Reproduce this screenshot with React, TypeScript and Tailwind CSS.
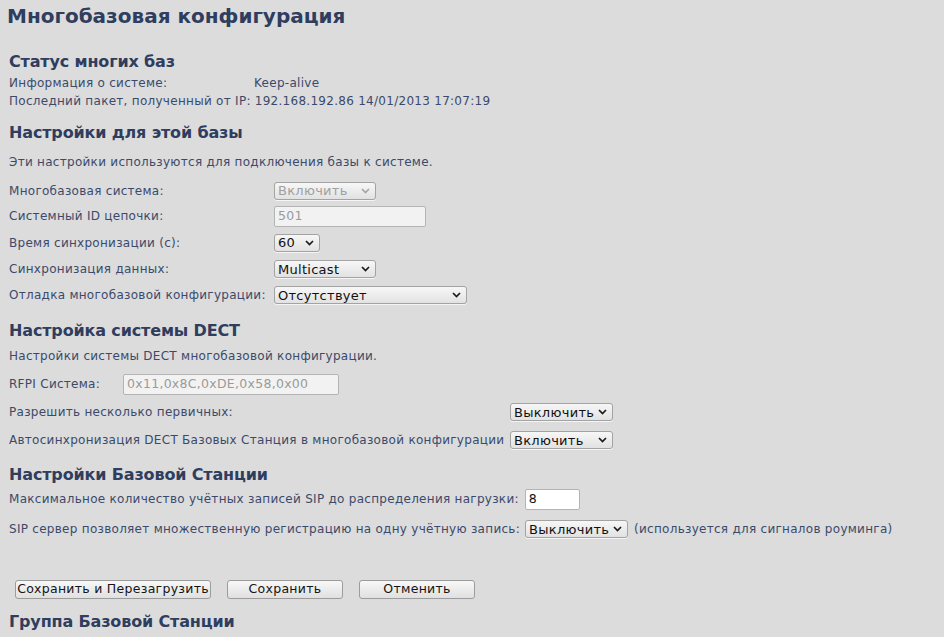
import React from "react";

const Chevron: React.FC<{ muted?: boolean }> = ({ muted }) => (
  <svg width="9" height="6" viewBox="0 0 9 6" className="shrink-0">
    <path
      d="M1 1 L4.5 4.5 L8 1"
      fill="none"
      stroke={muted ? "#a5a5a5" : "#1a1a1a"}
      strokeWidth="1.7"
    />
  </svg>
);

const FakeSelect: React.FC<{ value: string; width: string; disabled?: boolean }> = ({
  value,
  width,
  disabled,
}) => (
  <div
    className={`${width} h-[18px] flex items-center justify-between pl-[3px] pr-[5px] rounded-[3px] border border-[#a3a3a3] bg-gradient-to-b from-[#f7f7f7] to-[#e2e2e2] shadow-[0_1px_0_rgba(255,255,255,0.7)] text-[13px] leading-none ${
      disabled ? "text-[#a0a0a0]" : "text-[#111]"
    }`}
  >
    <span>{value}</span>
    <Chevron muted={disabled} />
  </div>
);

const TextBox: React.FC<{ value: string; width: string; disabled?: boolean }> = ({
  value,
  width,
  disabled,
}) => (
  <div
    className={`${width} h-[21px] flex items-center pl-[3px] rounded-[2px] border border-[#b4b4b4] text-[12.5px] leading-none ${
      disabled ? "bg-[#f2f2f2] text-[#9a9a9a]" : "bg-white text-[#111]"
    }`}
  >
    {value}
  </div>
);

const Heading: React.FC<{ children: React.ReactNode; className?: string }> = ({
  children,
  className,
}) => (
  <h2
    className={`text-[16px] leading-[20px] font-bold tracking-[-0.15px] text-[#2f3d5e] pl-[9px] ${className ?? ""}`}
  >
    {children}
  </h2>
);

const Btn: React.FC<{ label: string; width: string }> = ({ label, width }) => (
  <div
    className={`${width} h-[19px] flex items-center justify-center rounded-[3px] border border-[#9c9c9c] bg-gradient-to-b from-[#f8f8f8] to-[#e0e0e0] text-[12.5px] text-[#141414] leading-none`}
  >
    {label}
  </div>
);

export default function App() {
  return (
    <div
      className="min-h-[637px] w-full bg-[#dcdcdc] text-[12px] tracking-[0.28px] text-[#3b4a6b] overflow-hidden"
      style={{ fontFamily: '"DejaVu Sans", Verdana, sans-serif' }}
    >
      <h1 className="mt-[4px] pl-[7px] text-[20px] leading-[24px] font-bold tracking-normal text-[#2f3d5e]">
        Многобазовая конфигурация
      </h1>

      <Heading className="mt-[24px]">Статус многих баз</Heading>
      <div className="pl-[9px] leading-[18px] mt-[2px]">
        <div className="flex">
          <span className="w-[245px]">Информация о системе:</span>
          <span>Keep-alive</span>
        </div>
        <div className="flex">
          <span>Последний пакет, полученный от IP:</span>
          <span className="ml-[4px]">192.168.192.86 14/01/2013 17:07:19</span>
        </div>
      </div>

      <Heading className="mt-[13px]">Настройки для этой базы</Heading>
      <p className="pl-[9px] leading-[18px] mt-[10px]">
        Эти настройки используются для подключения базы к системе.
      </p>
      <div className="pl-[9px] mt-[7px]">
        <div className="flex items-center h-[25px]">
          <span className="w-[265px]">Многобазовая система:</span>
          <FakeSelect value="Включить" width="w-[102px]" disabled />
        </div>
        <div className="flex items-center h-[26px]">
          <span className="w-[265px]">Системный ID цепочки:</span>
          <TextBox value="501" width="w-[152px]" disabled />
        </div>
        <div className="flex items-center h-[27px]">
          <span className="w-[265px]">Время синхронизации (с):</span>
          <FakeSelect value="60" width="w-[46px]" />
        </div>
        <div className="flex items-center h-[26px]">
          <span className="w-[265px]">Синхронизация данных:</span>
          <FakeSelect value="Multicast" width="w-[102px]" />
        </div>
        <div className="flex items-center h-[26px]">
          <span className="w-[265px]">Отладка многобазовой конфигурации:</span>
          <FakeSelect value="Отсутствует" width="w-[193px]" />
        </div>
      </div>

      <Heading className="mt-[13px]">Настройка системы DECT</Heading>
      <p className="pl-[9px] leading-[18px] mt-[6px]">
        Настройки системы DECT многобазовой конфигурации.
      </p>
      <div className="pl-[9px] mt-[5px]">
        <div className="flex items-center h-[28px]">
          <span className="w-[114px]">RFPI Система:</span>
          <TextBox value="0x11,0x8C,0xDE,0x58,0x00" width="w-[216px]" disabled />
        </div>
        <div className="flex items-center h-[28px]">
          <span className="w-[501px]">Разрешить несколько первичных:</span>
          <FakeSelect value="Выключить" width="w-[103px]" />
        </div>
        <div className="flex items-center h-[28px]">
          <span className="w-[501px] whitespace-nowrap">
            Автосинхронизация DECT Базовых Станция в многобазовой конфигурации
          </span>
          <FakeSelect value="Включить" width="w-[103px]" />
        </div>
      </div>

      <Heading className="mt-[11px]">Настройки Базовой Станции</Heading>
      <div className="pl-[9px] mt-[1px]">
        <div className="flex items-center h-[26px]">
          <span className="whitespace-nowrap">
            Максимальное количество учётных записей SIP до распределения нагрузки:
          </span>
          <div className="ml-[6px]">
            <TextBox value="8" width="w-[55px]" />
          </div>
        </div>
        <div className="flex items-center h-[26px] mt-[4px]">
          <span className="whitespace-nowrap">
            SIP сервер позволяет множественную регистрацию на одну учётную запись:
          </span>
          <div className="ml-[5px]">
            <FakeSelect value="Выключить" width="w-[103px]" />
          </div>
          <span className="ml-[6px] whitespace-nowrap">(используется для сигналов роуминга)</span>
        </div>
      </div>

      <div className="flex gap-[16px] pl-[15px] mt-[38px]">
        <Btn label="Сохранить и Перезагрузить" width="w-[196px]" />
        <Btn label="Сохранить" width="w-[116px]" />
        <Btn label="Отменить" width="w-[116px]" />
      </div>

      <Heading className="mt-[13px] pl-[7px]">Группа Базовой Станции</Heading>
    </div>
  );
}
